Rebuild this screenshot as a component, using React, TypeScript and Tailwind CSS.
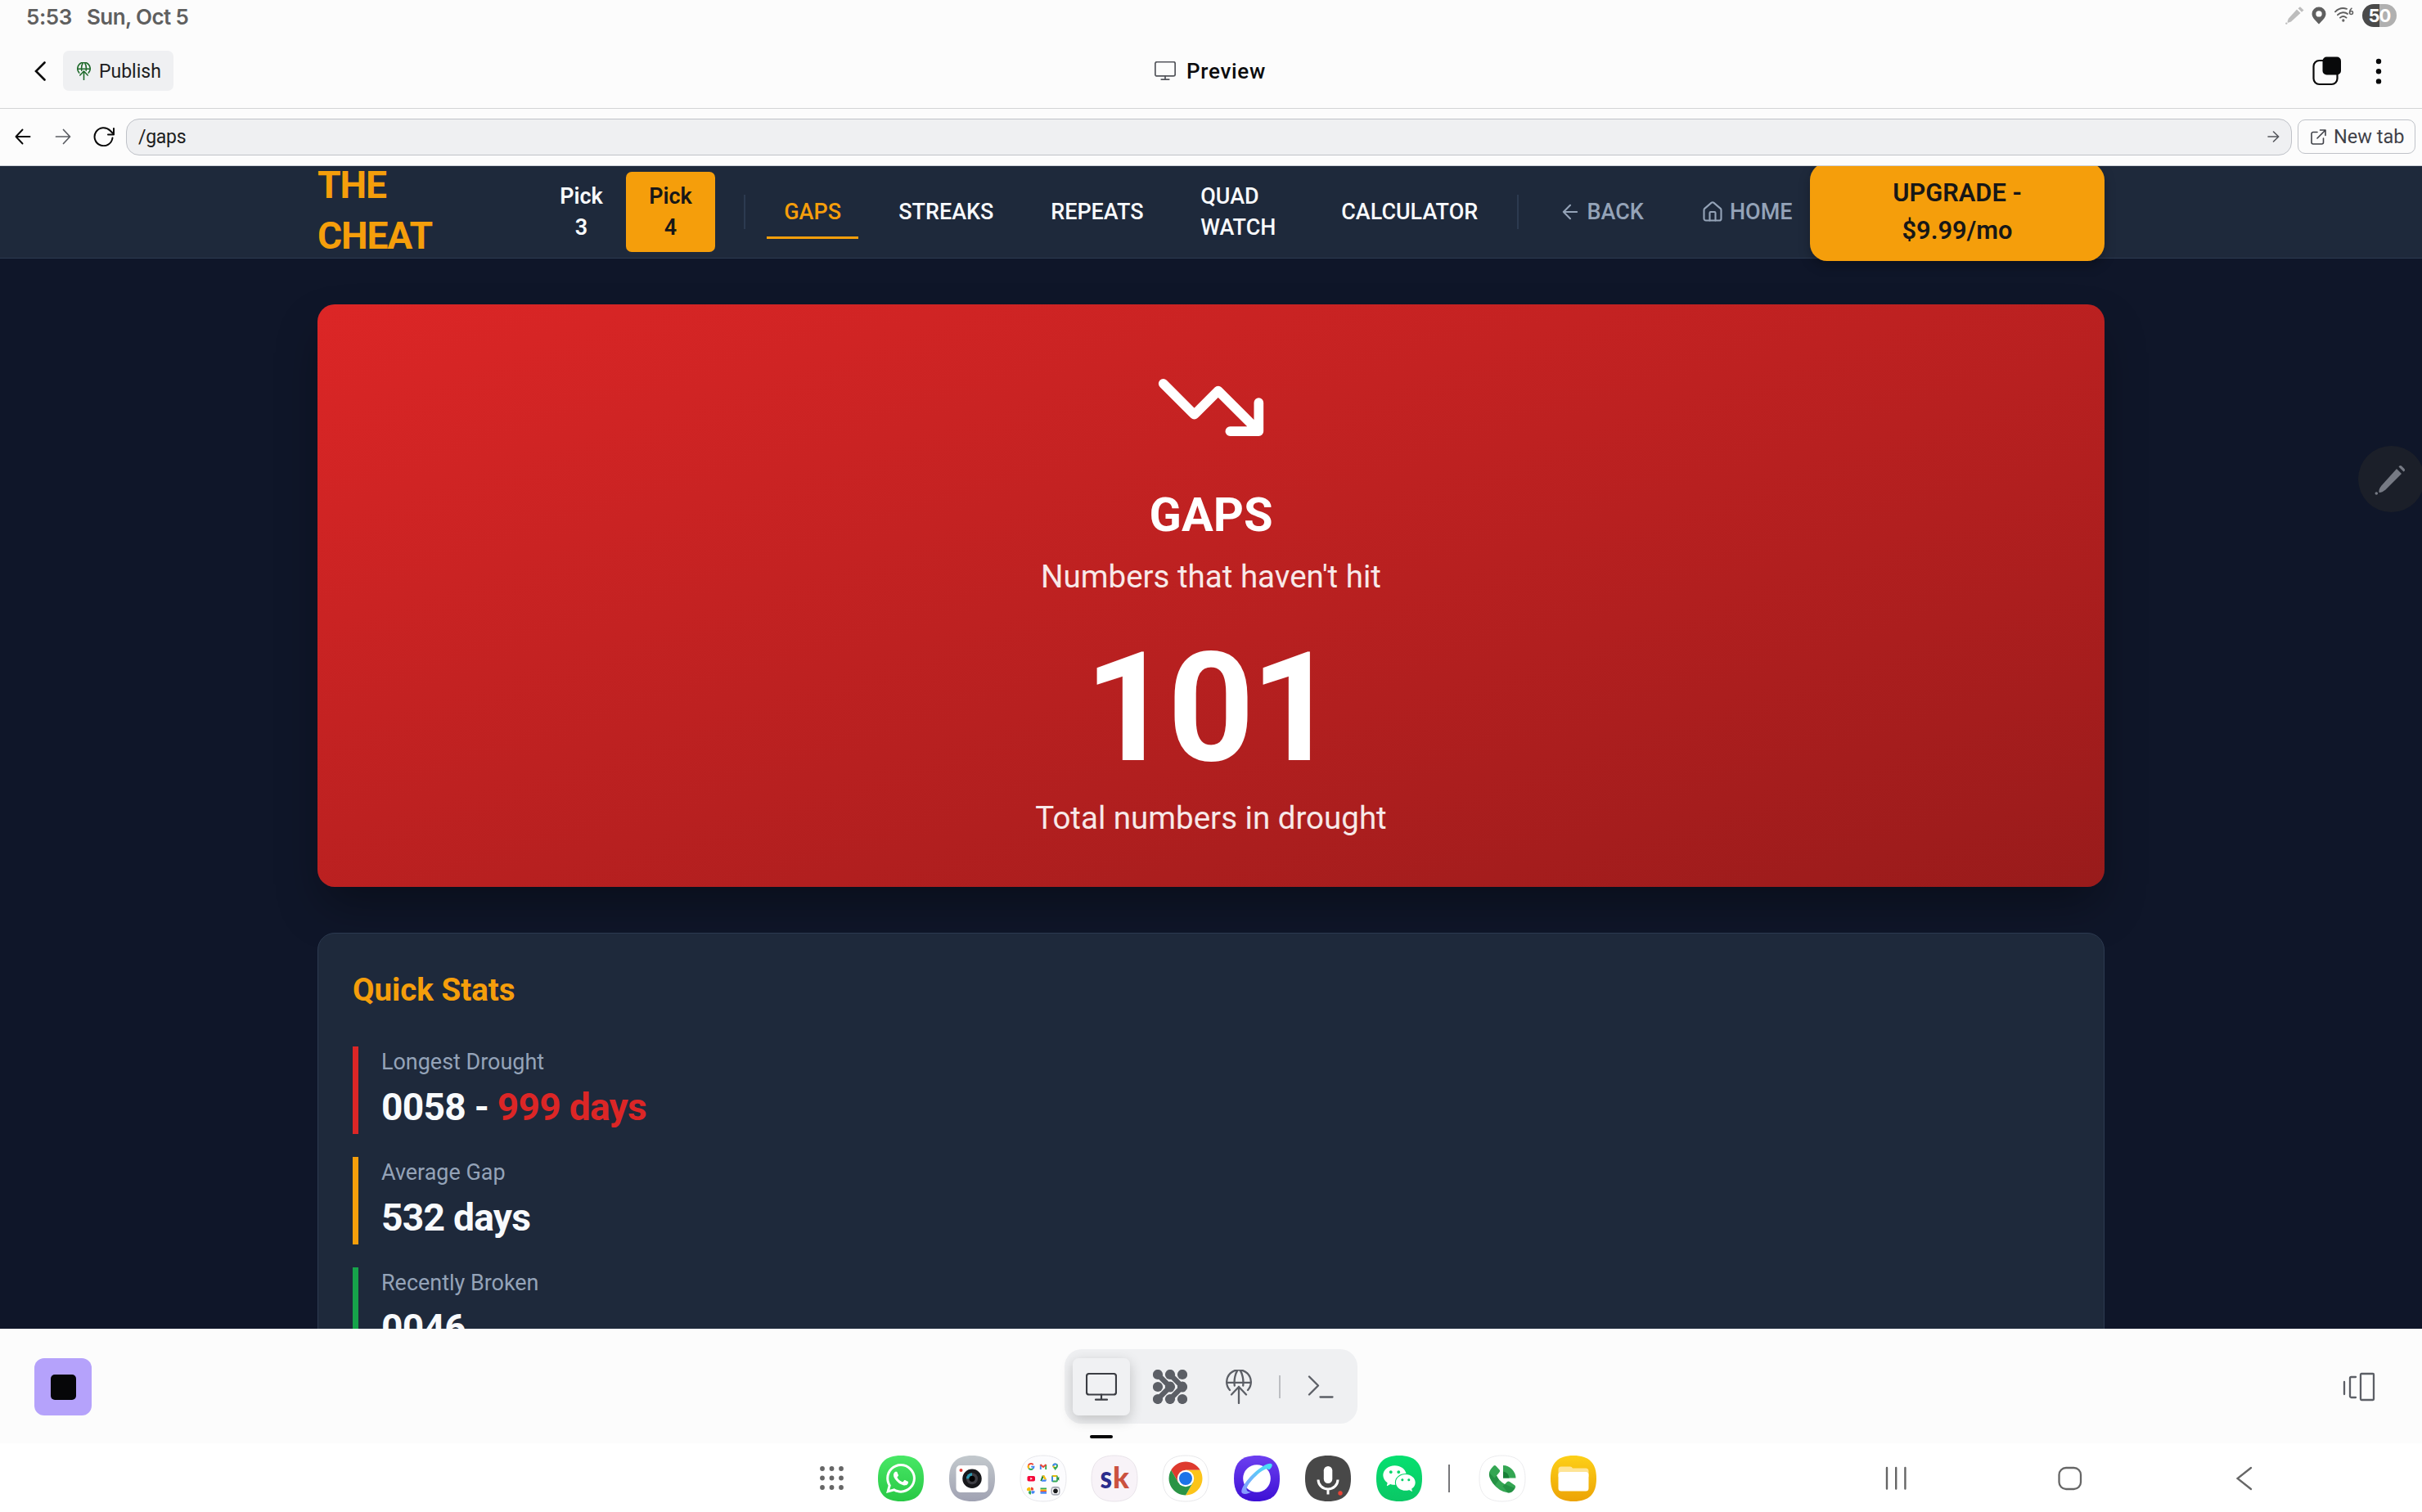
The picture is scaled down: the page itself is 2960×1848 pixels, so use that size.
import type { ReactNode } from "react";
import { FaWhatsapp } from "react-icons/fa6";
import { AiFillWechat } from "react-icons/ai";

function Monitor({ className, stroke }: { className: string; stroke: number }) {
  return (
    <svg className={className} viewBox="0 0 38 34" fill="none" stroke="currentColor" strokeWidth={stroke} strokeLinecap="round">
      <rect x="1" y="1" width="36" height="25.5" rx="3" />
      <path d="M19 26.5V32.5M12 32.7H26" />
    </svg>
  );
}

function GlobeUp({ className, stroke }: { className: string; stroke: number }) {
  return (
    <svg className={className} viewBox="0 0 32 42" fill="none" stroke="currentColor" strokeWidth={stroke} strokeLinecap="round" strokeLinejoin="round">
      <path d="M5 25A14.8 14.8 0 1 1 27 25" />
      <path d="M1.5 15.8H30.5" />
      <path d="M10.8 19.5C9.8 12 12 4.500 14 1.500M21.200 19.500C22.200 12 20 4.500 18 1.500" />
      <path d="M16 41V21M7 30.500L16 21L25 30.500" />
    </svg>
  );
}

function StatusBar() {
  return (
    <div className="flex h-[42px] items-start justify-between pl-[32px] pr-[31px] pt-[5px] text-[#5f5f5f]">
      <div className="flex h-[32px] items-center font-['Inter'] text-[26px] font-semibold leading-[32px]">
        <span className="w-[74px] whitespace-nowrap tracking-[-0.400px]">5:53</span>
        <span className="whitespace-nowrap tracking-[-0.600px]">Sun, Oct 5</span>
      </div>
      <div className="flex items-center">
        <svg className="mr-[9px] h-[22px] w-[23px]" viewBox="0 0 23 22" fill="#bdbdbd">
          <path d="M14 3.500L18.500 8L7 18.500Q4 20 2.500 19.500Q2.500 17 4 14.500Z" />
          <path d="M15.500 2.200L18 0.300L22.500 4.500L20 6.800Z" />
          <circle cx="1.300" cy="20.600" r="1.200" />
        </svg>
        <svg className="mr-[10px] h-[22px] w-[18px]" viewBox="0 0 18 22" fill="#5f5f5f" fillRule="evenodd">
          <path d="M9 0.500A8.500 8.500 0 0 1 17.500 9C17.500 14 12 18 9 21.500C6 18 0.500 14 0.500 9A8.500 8.500 0 0 1 9 0.500ZM9 5.200A3.700 3.700 0 1 0 9 12.600A3.700 3.700 0 1 0 9 5.200Z" />
        </svg>
        <svg className="mb-[3px] mr-[10px] h-[18px] w-[24px]" viewBox="0 0 24 18" fill="none" stroke="#5f5f5f" strokeWidth="1.900" strokeLinecap="round">
          <path d="M1 5.300C5 1.300 10.500 0.400 15 1.800M4 9.200C7.500 5.600 13 5.400 16 8M7 12.600C9.300 10.600 12.200 10.600 14.500 12.600" />
          <circle cx="10.800" cy="16" r="0.700" />
          <circle cx="20.500" cy="6.500" r="2" strokeWidth="1.500" />
          <path d="M21 1.200C19.300 2.500 18.500 4.500 18.500 6.500" strokeWidth="1.500" />
        </svg>
        <div className="flex h-[28px] w-[42px] items-center justify-center rounded-full bg-gradient-to-r from-[#4a4a4a] from-50% to-[#b0b0b0] to-50% font-['Inter'] text-[22px] font-bold leading-none tracking-[-1px] text-white">
          50
        </div>
      </div>
    </div>
  );
}

function AppHeader() {
  return (
    <div className="flex h-[91px] items-center justify-between border-b-[1.500px] border-[#d3d4d6] pb-[1px] pl-[41px] pr-[48px]">
      <div className="flex w-[600px] items-center">
        <svg className="mr-[20px] h-[24px] w-[16px]" viewBox="0 0 16 24" fill="none" stroke="#0a0a0a" strokeWidth="2.600" strokeLinecap="round">
          <path d="M13.500 1.500L3 12L13.500 22.500" />
        </svg>
        <div className="flex h-[49px] w-[135px] items-center rounded-[7px] bg-[#eff0f2] pl-[17px] text-[#1c1d20]">
          <GlobeUp className="mr-[10px] h-[22px] w-[17px] text-[#1f6a2b]" stroke={3} />
          <span className="whitespace-nowrap pt-[2px] text-[23px] leading-none">Publish</span>
        </div>
      </div>
      <div className="flex items-center pl-[5px]">
        <Monitor className="mr-[13px] h-[23px] w-[26px] text-[#54565c]" stroke={2.600} />
        <span className="whitespace-nowrap pt-[1px] text-[26px] font-medium leading-none tracking-[0.700px] text-[#0b0c0d]">Preview</span>
      </div>
      <div className="flex w-[600px] items-center justify-end">
        <svg className="mr-[40px] h-[36px] w-[36px]" viewBox="0 0 36 36">
          <rect x="1.500" y="5" width="29" height="29" rx="7" fill="none" stroke="#0a0a0a" strokeWidth="2.200" />
          <rect x="12.500" y="0.500" width="22.500" height="22" rx="5" fill="#08090a" />
        </svg>
        <svg className="h-[32px] w-[10px]" viewBox="0 0 10 32" fill="#08090a">
          <circle cx="5" cy="4" r="3.200" />
          <circle cx="5" cy="16.200" r="3.200" />
          <circle cx="5" cy="28.400" r="3.200" />
        </svg>
      </div>
    </div>
  );
}

function AddressBar() {
  return (
    <div className="flex h-[70px] items-center border-b border-[#cfd3da] pb-[1px] pl-[18px] pr-[8px]">
      <svg className="h-[20px] w-[20px]" viewBox="0 0 20 20" fill="none" stroke="#0a0a0a" strokeWidth="1.900" strokeLinecap="round" strokeLinejoin="round">
        <path d="M18.500 10H1.500M9.500 1.500L1.500 10L9.500 18.500" />
      </svg>
      <svg className="ml-[29px] h-[20px] w-[20px]" viewBox="0 0 20 20" fill="none" stroke="#5a5c62" strokeWidth="1.700" strokeLinecap="round" strokeLinejoin="round">
        <path d="M1.500 10H18.500M10.500 1.500L18.500 10L10.500 18.500" />
      </svg>
      <svg className="ml-[27px] h-[24px] w-[27px]" viewBox="0 0 27 24" fill="none" stroke="#0a0a0a" strokeWidth="2" strokeLinecap="round" strokeLinejoin="round">
        <path d="M23.500 13.500A11 11 0 1 1 20.500 4.500L25 9" />
        <path d="M25 2V9.500H18" />
      </svg>
      <div className="ml-[13px] flex h-[45px] w-[2647px] items-center justify-between rounded-[16px] border-[1.500px] border-[#bfc2c8] bg-[#eff0f2] pl-[14px] pr-[14px]">
        <span className="pt-[1px] text-[23px] leading-none tracking-[-0.300px] text-[#1c1d20]">/gaps</span>
        <svg className="h-[14px] w-[15px]" viewBox="0 0 15 14" fill="none" stroke="#54565c" strokeWidth="1.600" strokeLinecap="round" strokeLinejoin="round">
          <path d="M1 7H13.700M7.500 1L13.700 7L7.500 13" />
        </svg>
      </div>
      <div className="ml-[7px] flex h-[42px] w-[144px] items-center rounded-[9px] border-[1.500px] border-[#bfc2c8] pl-[15px] text-[#3f4148]">
        <svg className="mr-[9px] h-[19px] w-[19px]" viewBox="0 0 19 19" fill="none" stroke="currentColor" strokeWidth="1.600" strokeLinecap="round" strokeLinejoin="round">
          <path d="M8 3.500H3A2 2 0 0 0 1 5.500V16A2 2 0 0 0 3 18H13.500A2 2 0 0 0 15.500 16V11" />
          <path d="M11.500 1H18V7.500M18 1L8 11" />
        </svg>
        <span className="whitespace-nowrap pt-[1px] text-[23.500px] leading-none">New tab</span>
      </div>
    </div>
  );
}

function NavLink({ children, className }: { children: ReactNode; className: string }) {
  return <div className={`flex h-[66px] shrink-0 items-center px-[21px] ${className}`}>{children}</div>;
}

function SiteNav() {
  return (
    <div className="relative h-[113px] border-b-[1.750px] border-[#2c3a50] bg-[#1e293b]">
      <div className="mx-[388px] flex h-[112px] items-center text-[26.950px] font-medium leading-[38.500px] text-[#f8fafc]">
        <div className="w-[268px] shrink-0 pb-[3px] text-[46.200px] font-bold leading-[61.600px] tracking-[-1.150px] text-[#f59e0b]">
          THE
          <br />
          CHEAT
        </div>
        <div className="flex h-[98px] w-[109px] shrink-0 items-center rounded-[7px] px-[28px] text-center font-semibold">Pick 3</div>
        <div className="flex h-[98px] w-[109px] shrink-0 items-center rounded-[7px] bg-[#f59e0b] px-[28px] text-center font-semibold text-[#171717]">
          Pick 4
        </div>
        <div className="ml-[35px] mr-[26.500px] h-[42px] w-[1.750px] shrink-0 bg-[#2c3a50]" />
        <NavLink className="w-[112px] border-b-[3.500px] border-[#f59e0b] pt-[3px] text-[#f59e0b]">GAPS</NavLink>
        <NavLink className="ml-[28px] w-[158px]">STREAKS</NavLink>
        <NavLink className="ml-[28px] w-[155px]">REPEATS</NavLink>
        <NavLink className="ml-[28px] w-[144px]">
          <span>
            QUAD
            <br />
            WATCH
          </span>
        </NavLink>
        <NavLink className="ml-[28px] w-[208px]">CALCULATOR</NavLink>
        <div className="ml-[28px] mr-[27.500px] h-[42px] w-[1.750px] shrink-0 bg-[#2c3a50]" />
        <NavLink className="w-[147px] text-[#94a3b8]">
          <svg className="mr-[7px] h-[28px] w-[28px] shrink-0" viewBox="0 0 24 24" fill="none" stroke="currentColor" strokeWidth="1.800" strokeLinecap="round" strokeLinejoin="round">
            <path d="m12 19-7-7 7-7M19 12H5" />
          </svg>
          BACK
        </NavLink>
        <NavLink className="ml-[27.500px] w-[152px] text-[#94a3b8]">
          <svg className="mr-[7px] h-[28px] w-[28px] shrink-0" viewBox="0 0 24 24" fill="none" stroke="currentColor" strokeWidth="1.800" strokeLinecap="round" strokeLinejoin="round">
            <path d="M15 21v-8a1 1 0 0 0-1-1h-4a1 1 0 0 0-1 1v8" />
            <path d="M3 10a2 2 0 0 1 .709-1.528l7-5.999a2 2 0 0 1 2.582 0l7 5.999A2 2 0 0 1 21 10v9a2 2 0 0 1-2 2H5a2 2 0 0 1-2-2z" />
          </svg>
          HOME
        </NavLink>
        <div className="ml-auto flex h-[120px] w-[360px] shrink-0 items-center justify-center rounded-[21px] bg-[#f59e0b] text-center text-[30.800px] font-semibold leading-[46.200px] text-[#171717] shadow-[0_6px_14px_rgba(0,0,0,0.25)]">
          <span>
            UPGRADE -
            <br />
            $9.99/mo
          </span>
        </div>
      </div>
    </div>
  );
}

function Hero() {
  return (
    <div className="mt-[56px] flex h-[712px] flex-col items-center rounded-[21px] bg-[linear-gradient(to_bottom_right,#dc2626,#991b1b)] pt-[56px] text-white shadow-[0_28px_56px_-8px_rgba(0,0,0,0.35)]">
      <svg className="h-[140px] w-[140px]" viewBox="0 0 24 24" fill="none" stroke="currentColor" strokeWidth="2" strokeLinecap="round" strokeLinejoin="round">
        <path d="M22 17L13.500 8.500L8.500 13.500L2 7M16 17H22V11" />
      </svg>
      <div className="mt-[27px] text-[57.750px] font-bold leading-[69.300px]">GAPS</div>
      <div className="mt-[14px] text-[38.500px] leading-[53.900px] text-white/90">Numbers that haven't hit</div>
      <div className="mt-[42px] pr-[4.600px] text-[184.800px] font-bold leading-[184.800px] tracking-[-4.600px]">101</div>
      <div className="mt-[14px] text-[38.500px] leading-[53.900px] text-white/90">Total numbers in drought</div>
    </div>
  );
}

function Stat({ label, bar, children }: { label: string; bar: string; children: ReactNode }) {
  return (
    <div className={`mb-[28px] h-[107px] border-l-[7px] pl-[28px] ${bar}`}>
      <div className="text-[26.950px] leading-[38.500px] text-[#94a3b8]">{label}</div>
      <div className="mt-[6px] text-[46.200px] font-bold leading-[61.600px] tracking-[-0.770px] text-[#f8fafc]">{children}</div>
    </div>
  );
}

function QuickStats() {
  return (
    <div className="mt-[56px] h-[700px] rounded-[21px] border-[1.750px] border-[#2c3a50] bg-[#1e293b] px-[42px] pt-[42px]">
      <div className="mb-[42px] text-[38.500px] font-bold leading-[53.900px] text-[#f59e0b]">Quick Stats</div>
      <Stat label="Longest Drought" bar="border-[#dc2626]">
        0058 - <span className="text-[#dc2626]">999 days</span>
      </Stat>
      <Stat label="Average Gap" bar="border-[#f59e0b]">532 days</Stat>
      <Stat label="Recently Broken" bar="border-[#16a34a]">0046</Stat>
    </div>
  );
}

function PreviewPane() {
  return (
    <div className="relative h-[1421px] overflow-hidden bg-[#0f1629] font-['Roboto']">
      <SiteNav />
      <div className="px-[388px]">
        <Hero />
        <QuickStats />
      </div>
      <div className="absolute left-[2882px] top-[342px] flex size-[81px] items-center justify-center rounded-full bg-[#1b1f29]">
        <svg className="mr-[3px] h-[38px] w-[38px]" viewBox="0 0 38 38" fill="#767a84">
          <path d="M27 6L33 12L13.500 31.500Q8.500 35.500 5.500 35Q4.500 31.500 8.500 26.500Z" />
          <path d="M29.500 3.500Q31.500 1 33.500 3L36.500 6Q38 8 35.500 9.500Z" />
          <circle cx="2.300" cy="36" r="1.800" />
        </svg>
      </div>
    </div>
  );
}

/* Tool picker glyph: a 3 by 3 lattice of discs with diagonal bridges. */
function Lattice({ className }: { className: string }) {
  return (
    <svg className={className} viewBox="0 0 42 42" fill="#5c5f66">
      {[6, 21, 36].map((y) => [6, 21, 36].map((x) => <circle key={`${x}-${y}`} cx={x} cy={y} r="6.100" />))}
      <path d="M6 6L21 21L6 36M21 6L36 21L21 36" fill="none" stroke="#5c5f66" strokeWidth="6.400" />
      <path d="M17 16Q21 13 25 16V26Q21 29 17 26ZM32 16Q36 13 40 16V26Q36 29 32 26Z" />
    </svg>
  );
}

function Toolbar() {
  return (
    <div className="flex h-[140px] justify-between bg-[#fcfcfc] pl-[42px] pr-[57px]">
      <div className="w-[600px] pt-[36px]">
        <div className="flex size-[70px] items-center justify-center rounded-[12px] bg-[#b5a2fb]">
          <div className="size-[31px] rounded-[5px] bg-[#060608]" />
        </div>
      </div>
      <div className="mr-[-15px] pt-[25px]">
        <div className="flex h-[91px] w-[358px] items-center rounded-[21px] bg-[#eff0f2] pl-[10px]">
          <div className="flex size-[70px] items-center justify-center rounded-[7px] bg-[#f0f1f3] shadow-[0_5px_16px_rgba(0,0,0,0.2)]">
            <Monitor className="h-[34px] w-[38px] text-[#3b3d43]" stroke={2.200} />
          </div>
          <Lattice className="ml-[28px] size-[42px]" />
          <GlobeUp className="ml-[47px] h-[42px] w-[32px] text-[#5c5f66]" stroke={2.300} />
          <div className="ml-[33px] h-[28px] w-[2px] bg-[#bcbec2]" />
          <svg className="ml-[33px] h-[28px] w-[32px]" viewBox="0 0 32 28" fill="none" stroke="#5c5f66" strokeWidth="2.300" strokeLinecap="round" strokeLinejoin="round">
            <path d="M2 1.500L13 12.500L2 23.500M15.500 26.500H30.500" />
          </svg>
        </div>
        <div className="ml-[31px] mt-[14px] h-[4px] w-[28px] rounded-full bg-[#060608]" />
      </div>
      <div className="flex w-[600px] justify-end pt-[53px]">
        <svg className="h-[36px] w-[40px]" viewBox="0 0 40 36" fill="none" stroke="#5c5f66" strokeWidth="2.300" strokeLinecap="round">
          <path d="M2 12V27M16 6H10.500A1.500 1.500 0 0 0 9 7.500V29.500A1.500 1.500 0 0 0 10.500 31H16" />
          <rect x="22" y="2" width="16" height="32" rx="1" />
        </svg>
      </div>
    </div>
  );
}

const SQUIRCLE = "M28 0C47 0 56 9 56 28S47 56 28 56S0 47 0 28S9 0 28 0Z";

function AppIcon({ fill, border, children }: { fill: string; border?: string; children: ReactNode }) {
  return (
    <div className="flex w-[87px] shrink-0 justify-center">
      <svg className="size-[56px] overflow-visible" viewBox="0 0 56 56">
        <defs>
          <linearGradient id="g-whatsapp" x2="0" y2="1">
            <stop stopColor="#48e866" />
            <stop offset="1" stopColor="#28c845" />
          </linearGradient>
          <linearGradient id="g-camera" x2="0" y2="1">
            <stop stopColor="#c3c9cd" />
            <stop offset="1" stopColor="#a0a2b2" />
          </linearGradient>
          <linearGradient id="g-internet" x2="0" y2="1">
            <stop stopColor="#6d3ff0" />
            <stop offset="1" stopColor="#3d10d4" />
          </linearGradient>
          <linearGradient id="g-wechat" x2="0" y2="1">
            <stop stopColor="#06e070" />
            <stop offset="1" stopColor="#0ac765" />
          </linearGradient>
          <linearGradient id="g-files" x2="0" y2="1">
            <stop stopColor="#fdd017" />
            <stop offset="1" stopColor="#eca306" />
          </linearGradient>
          <linearGradient id="g-ring" x1="1" y1="0" x2="0" y2="1">
            <stop stopColor="#41e6f5" />
            <stop offset="1" stopColor="#8c95ff" />
          </linearGradient>
        </defs>
        <path d={SQUIRCLE} fill={fill} stroke={border ?? "none"} strokeWidth="1" />
        {children}
      </svg>
    </div>
  );
}

function Dock() {
  return (
    <div className="flex h-[85px] items-center bg-white pl-[973px]">
      <div className="flex w-[84px] shrink-0 justify-center pl-[2px]">
        <svg className="size-[29px]" viewBox="0 0 29 29" fill="#666">
          {[3, 14.5, 26].map((y) => [3, 14.5, 26].map((x) => <circle key={`${x}-${y}`} cx={x} cy={y} r="2.900" />))}
        </svg>
      </div>
      <AppIcon fill="url(#g-whatsapp)">
        <FaWhatsapp x="7.500" y="7.500" size={41} color="#fff" />
      </AppIcon>
      <AppIcon fill="url(#g-camera)">
        <rect x="8.500" y="12" width="39" height="33" rx="5" fill="#fff" />
        <circle cx="14.500" cy="18" r="2" fill="#e23b34" />
        <circle cx="28" cy="28.300" r="11.700" fill="#17181b" />
        <circle cx="28" cy="28.300" r="7" fill="#3e3e44" />
        <path d="M28 21.300A7 7 0 0 0 21 28.300H28Z" fill="#2c98b0" />
        <circle cx="28" cy="28.300" r="3.600" fill="#020203" />
      </AppIcon>
      <AppIcon fill="#fcfcfe" border="#e8e8ec">
        <g fill="none" strokeWidth="1.900">
          <path d="M10.300 15.300A3.200 3.200 0 0 1 15.700 11.300" stroke="#ea4335" />
          <path d="M10.300 11.800A3.200 3.200 0 0 0 10.400 15.600" stroke="#fbbc04" />
          <path d="M10.400 15.600A3.200 3.200 0 0 0 15.300 16" stroke="#34a853" />
          <path d="M13.200 13.600H16.500A3.200 3.200 0 0 1 15.300 16" stroke="#4285f4" />
          <path d="M24.800 17V11" stroke="#4285f4" />
          <path d="M31.200 17V11" stroke="#34a853" />
          <path d="M24.500 11L28 14L31.500 11" stroke="#ea4335" />
        </g>
        <path d="M42.700 9.500A3.300 3.300 0 0 1 46 12.800C46 15 43.500 16 42.700 18.300C42 16 39.400 15 39.400 12.800A3.300 3.300 0 0 1 42.700 9.500Z" fill="#34a853" />
        <path d="M42.700 9.500A3.300 3.300 0 0 0 39.400 12.800L42.700 12.500L45.500 10.900Z" fill="#4285f4" />
        <path d="M39.400 12.800L40.500 15.200L42.700 12.800Z" fill="#fbbc04" />
        <circle cx="42.700" cy="12.800" r="1.200" fill="#fff" />
        <rect x="8.500" y="25" width="9.500" height="6.600" rx="1.800" fill="#f5083a" />
        <path d="M12.300 26.800V29.800L14.900 28.300Z" fill="#fff" />
        <path d="M26.700 24.500H29.500L26 31H24.400Z" fill="#188038" />
        <path d="M26.700 24.500H29.500L32.200 29.500H29.500Z" fill="#fbbc04" />
        <path d="M25.500 31.800L26.800 29.500H32.200L31 31.800Z" fill="#4285f4" />
        <rect x="39" y="25" width="6" height="6.500" rx="1" fill="none" stroke="#34a853" strokeWidth="1.800" />
        <path d="M39 31.500V26" stroke="#4285f4" strokeWidth="1.800" />
        <path d="M39.500 25H44.500" stroke="#fbbc04" strokeWidth="1.800" />
        <path d="M45 28.300L47.300 25.800V30.800Z" fill="#188038" />
        <path d="M13 38.800V42.500H15.800A2.500 2.500 0 0 0 13 38.800Z" fill="#ea4335" />
        <path d="M17.500 43.300H13.500V46A2.500 2.500 0 0 0 17.500 43.300Z" fill="#4285f4" />
        <path d="M13 47.500V43.300H10.700A2.500 2.500 0 0 0 13 47.500Z" fill="#34a853" />
        <path d="M8.500 43H12.600V40A2.500 2.500 0 0 0 8.500 43Z" fill="#fbbc04" />
        <rect x="24.500" y="39.500" width="7.500" height="2" fill="#34a853" />
        <rect x="24.500" y="41.500" width="7.500" height="1.600" fill="#fbbc04" />
        <rect x="24.500" y="43" width="7.500" height="1.400" fill="#ea4335" />
        <rect x="24.500" y="44.300" width="7.500" height="2.400" fill="#4285f4" />
        <rect x="37.500" y="37.800" width="11" height="11" rx="4" fill="#abaeb8" />
        <rect x="39" y="40" width="8" height="6.800" rx="1.300" fill="#fff" />
        <circle cx="43" cy="43.300" r="2.800" fill="#17181b" />
      </AppIcon>
      <AppIcon fill="#f8f3f8" border="#e9e4ea">
        <text x="10.500" y="39.500" fontFamily="Lato" fontWeight="900" fontSize="37" fill="#2b2d8c" textLength="14.500" lengthAdjust="spacingAndGlyphs">
          s
        </text>
        <text x="26" y="39.500" fontFamily="Lato" fontWeight="900" fontSize="36" fill="#cb523f" textLength="20" lengthAdjust="spacingAndGlyphs">
          k
        </text>
      </AppIcon>
      <AppIcon fill="#fff" border="#e8e8ea">
        <path d="M10.250 17.750A20.500 20.500 0 0 1 45.750 17.750H28L19.100 33.100Z" fill="#de3a2e" />
        <path d="M45.750 17.750A20.500 20.500 0 0 1 28 48.500L36.900 33.100L28 17.750Z" fill="#fcc419" />
        <path d="M10.250 17.750A20.500 20.500 0 0 0 28 48.500L36.900 33.100H19.100Z" fill="#2a9445" />
        <circle cx="28" cy="28" r="10.200" fill="#fff" />
        <circle cx="28" cy="28" r="8" fill="#1b73e8" />
      </AppIcon>
      <AppIcon fill="url(#g-internet)">
        <circle cx="28" cy="28" r="16.800" fill="#fff" />
        <path d="M15.500 41.500C14.500 38 24 27 32 20.500C37 16.800 41.500 15 42 17.200C44 18 47.500 13 46.500 10.800C44.500 7.500 34 12.500 24.500 21.500C15 30.500 8 41 9.500 45.200C11 48 17 47 21 44.500C19 44.500 16 44 15.500 41.500Z" fill="url(#g-ring)" />
      </AppIcon>
      <AppIcon fill="#484848">
        <rect x="22.800" y="13" width="10.500" height="21" rx="5.250" fill="#fff" />
        <path d="M16 29.500A12 11.500 0 0 0 40 29.500M28 41V47.500" fill="none" stroke="#fff" strokeWidth="3" />
        <circle cx="43" cy="46" r="2.700" fill="#ea4335" />
      </AppIcon>
      <AppIcon fill="url(#g-wechat)">
        <AiFillWechat x="5.500" y="5.500" size={45} color="#fff" />
      </AppIcon>
      <div className="ml-[17px] mr-[20px] h-[34px] w-[2px] shrink-0 bg-[#77777a]" />
      <AppIcon fill="#fff" border="#ececee">
        <path d="M29 12A16 16 0 0 1 44.500 27.500H29Z" fill="#34a653" />
        <path d="M29 19.500A9 9 0 0 1 36.500 27.500H29Z" fill="#188038" />
        <path d="M17.500 12.500Q19 11.500 20.500 13L25 18Q25.500 19.500 24 21L21 24.500Q24 31 31 35L34 32Q35.500 31 37 32L43.500 36.500Q45 38 43.500 40Q40 46 35 45.500Q24 44 16.500 34Q11 26 12 21Q12.500 17.500 17.500 12.500Z" fill="#34a653" />
        <path d="M12 21L18.500 27.500L21 24.500L24 29.500L19 36.500Q11 28 12 21ZM31 35L43.500 40Q40 46 35 45.500L28.500 37.500Z" fill="#188038" opacity="0.550" />
      </AppIcon>
      <AppIcon fill="url(#g-files)">
        <path d="M9.500 17Q9.500 13.500 13 13.500H24Q26 13.500 27 15.500H43Q46.500 15.500 46.500 19V26H9.500Z" fill="#fee495" />
        <rect x="9.500" y="20" width="37" height="23.500" rx="3.500" fill="#fff" />
      </AppIcon>
      <div className="ml-auto mr-[207px] flex items-center text-[#666]">
        <svg className="h-[30px] w-[26px]" viewBox="0 0 26 30" stroke="currentColor" strokeWidth="2.400" strokeLinecap="round">
          <path d="M2 2V27.500M13.200 2V27.500M24.400 2V27.500" />
        </svg>
        <svg className="ml-[185px] h-[30px] w-[30px]" viewBox="0 0 30 30" fill="none" stroke="currentColor" strokeWidth="2.300">
          <rect x="1.500" y="2" width="26.500" height="26" rx="8.500" />
        </svg>
        <svg className="ml-[188px] h-[30px] w-[20px]" viewBox="0 0 20 30" fill="none" stroke="currentColor" strokeWidth="2.300" strokeLinecap="round">
          <path d="M18 2L1.500 15L18 28" />
        </svg>
      </div>
    </div>
  );
}

export default function App() {
  return (
    <div className="h-[1848px] w-[2960px] overflow-hidden bg-[#fcfcfc] font-['Roboto']">
      <StatusBar />
      <AppHeader />
      <AddressBar />
      <PreviewPane />
      <Toolbar />
      <Dock />
    </div>
  );
}
